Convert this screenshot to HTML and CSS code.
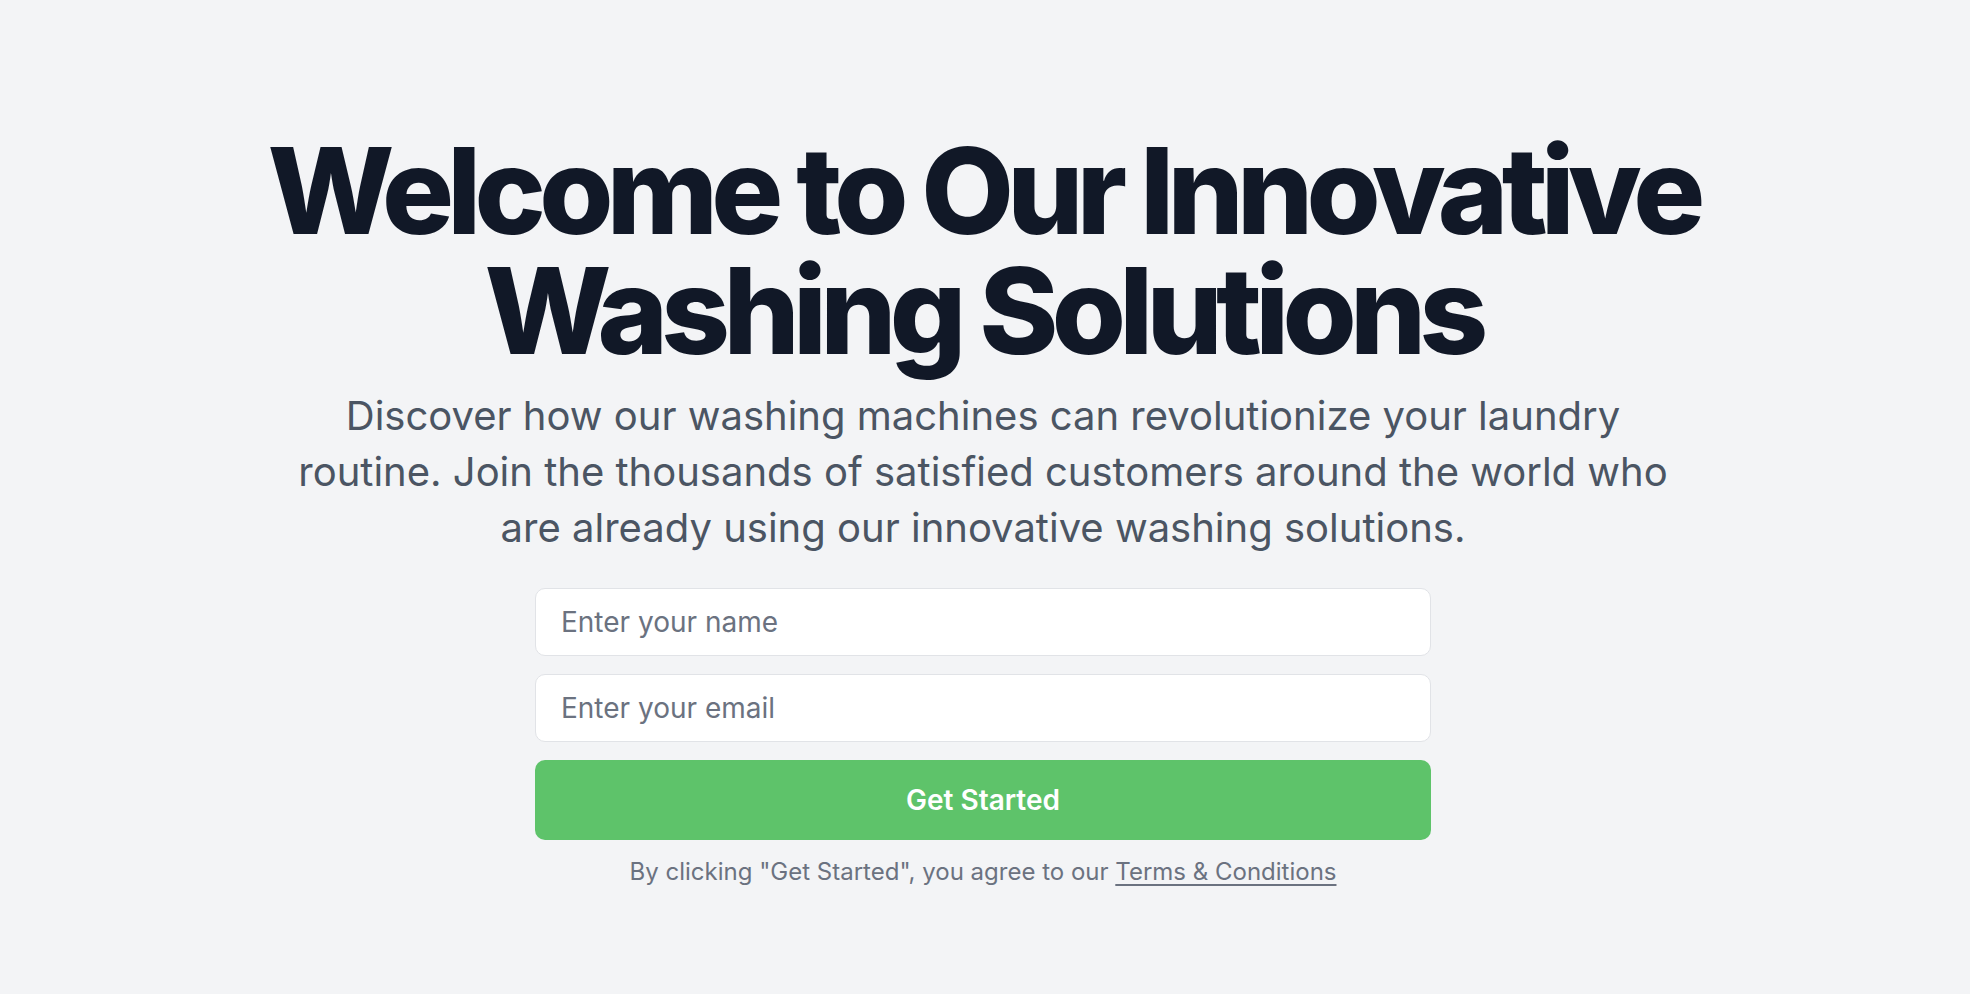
FILE: index.html
```html
<!DOCTYPE html>
<html lang="en">
<head>
<meta charset="utf-8">
<title>Innovative Washing Solutions</title>
<link rel="stylesheet" href="styles.css">
</head>
<body>
<main class="hero">
  <h1 class="hero-title">Welcome to Our Innovative Washing Solutions</h1>
  <p class="hero-text">Discover how our washing machines can revolutionize your laundry routine. Join the thousands of satisfied customers around the world who are already using our innovative washing solutions.</p>
  <form class="signup">
    <input class="field" type="text" placeholder="Enter your name">
    <input class="field" type="email" placeholder="Enter your email">
    <button class="cta" type="button">Get Started</button>
    <p class="legal">By clicking "Get Started", you agree to our <a class="legal-link" href="#">Terms &amp; Conditions</a></p>
  </form>
</main>
</body>
</html>
```

FILE: styles.css
```css
* { box-sizing: border-box; }
html, body { margin: 0; padding: 0; }
body {
  background: #f3f4f6;
  font-family: Inter, "Noto Sans", sans-serif;
  min-height: 994px;
}
.hero {
  display: flex;
  flex-direction: column;
  align-items: center;
  padding: 131px 4px 0 0;
  text-align: center;
}
.hero-title {
  margin: 0;
  font-size: 120px;
  line-height: 120px;
  font-weight: 800;
  letter-spacing: -0.056em;
  color: #111827;
  max-width: 1480px;
}
.hero-text {
  margin: 17px 0 0;
  max-width: 1400px;
  font-size: 40px;
  line-height: 56px;
  color: #4b5563;
}
.signup {
  margin-top: 32px;
  width: 896px;
  display: flex;
  flex-direction: column;
  gap: 18px;
}
.field {
  height: 68px;
  padding: 0 25px;
  border: 1px solid #e1e3e7;
  border-radius: 10px;
  background: #fff;
  font-family: inherit;
  font-size: 28px;
  color: #111827;
  outline: none;
}
.field::placeholder { color: #6b7280; }
.cta {
  height: 80px;
  border: 0;
  border-radius: 10px;
  background: #5ec36a;
  color: #fff;
  font-family: inherit;
  font-size: 28px;
  font-weight: 600;
  cursor: pointer;
}
.legal {
  margin: -4px 0 0;
  font-size: 24px;
  line-height: 36px;
  color: #6b7280;
}
.legal-link {
  color: #6b7280;
  text-decoration: underline;
  text-underline-offset: 4px;
  text-decoration-thickness: 1.5px;
}
```
